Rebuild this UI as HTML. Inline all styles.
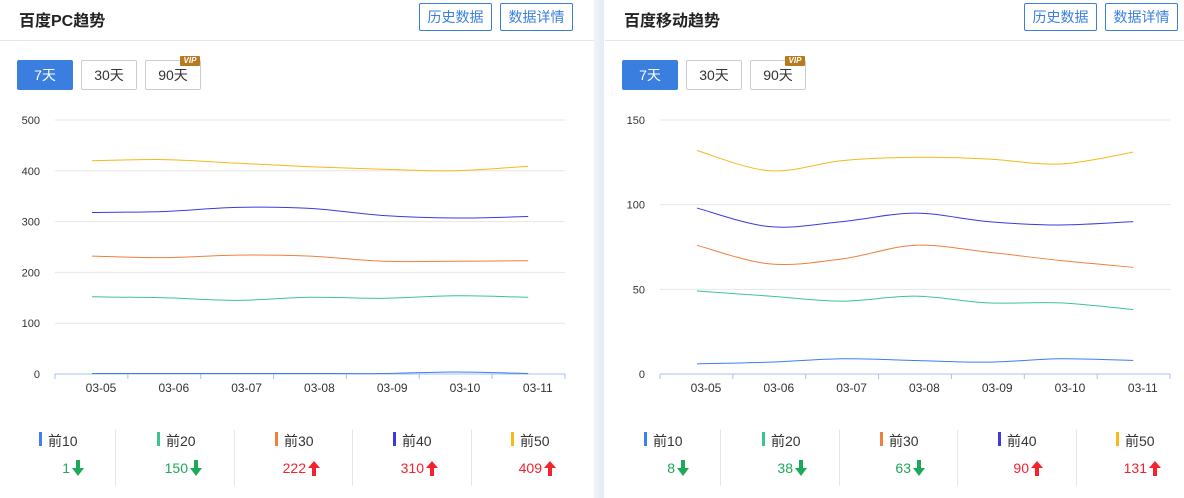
<!DOCTYPE html>
<html><head><meta charset="utf-8">
<style>
*{box-sizing:border-box;margin:0;padding:0}
body{width:1184px;height:498px;overflow:hidden;background:#fff;font-family:"Liberation Sans","Noto Sans CJK SC",sans-serif;position:relative}
.gap{position:absolute;left:594px;top:0;width:10px;height:498px;background:linear-gradient(90deg,#f0f3f8,#e4ebf6)}
.a{position:absolute;white-space:nowrap}
.title{font-size:16px;font-weight:bold;color:#222;top:7px}
.hb{top:3px;height:28px;border:1px solid #3a7fe0;border-radius:2px;color:#3a7fe0;font-size:14px;line-height:26px;text-align:center;width:73px}
.hl{top:40px;height:1px;background:#e6e6e6}
.tb{top:60px;height:30px;width:56px;border:1px solid #ccc;border-radius:2px;font-size:14px;line-height:28px;text-align:center;color:#333}
.tb.on{background:#3a7fe0;border-color:#3a7fe0;color:#fff}
.vip{width:20px;height:10px;background:#b87a1e;color:#fff;font-size:8px;line-height:10px;text-align:center;font-weight:bold;font-style:italic;border-radius:1px}
.lg{font-size:14px;color:#333;top:431px}
.bar{width:3px;height:14px;top:432px}
.val{font-size:14px;top:460px;text-align:right;width:60px}
.sep{top:430px;width:1px;height:56px;background:#e6e6e6}
</style></head><body>
<div class="gap"></div>
<div id="root"></div>
<svg id="sv" width="1184" height="498" style="position:absolute;left:0;top:0" font-family="Liberation Sans" font-size="11"></svg>
<script>
const R=document.getElementById('root'),S=document.getElementById('sv');
let html='',svg='';
function panel(ox,w,title,ymax,step,data,vals,dirs){
 html+=`<div class="a title" style="left:${ox+19}px">${title}</div>`;
 html+=`<div class="a hb" style="left:${ox+419}px">历史数据</div><div class="a hb" style="left:${ox+500}px">数据详情</div>`;
 html+=`<div class="a hl" style="left:${ox}px;width:${w}px"></div>`;
 html+=`<div class="a tb on" style="left:${ox+17}px">7天</div><div class="a tb" style="left:${ox+81}px">30天</div><div class="a tb" style="left:${ox+145}px">90天</div><div class="a vip" style="left:${ox+180}px;top:56px">VIP</div>`;
 const x0=ox+55,x1=ox+565,yb=374,yt=120;
 for(let v=0;v<=ymax;v+=step){const y=yb-(v/ymax)*(yb-yt);
  if(v>0)svg+=`<line x1="${x0}" x2="${x1}" y1="${y}" y2="${y}" stroke="#e6e6e6"/>`;
  svg+=`<text x="${ox+40}" y="${y+4}" text-anchor="end" fill="#333">${v}</text>`;}
 svg+=`<line x1="${x0}" x2="${x1}" y1="${yb}" y2="${yb}" stroke="#a9c1ee"/>`;
 for(let i=0;i<8;i++){const x=x0+i*(x1-x0)/7;svg+=`<line x1="${x}" x2="${x}" y1="${yb}" y2="${yb+5}" stroke="#a9c1ee"/>`;}
 const labs=['03-05','03-06','03-07','03-08','03-09','03-10','03-11'];
 labs.forEach((l,i)=>svg+=`<text x="${ox+101+i*72.8}" y="392" text-anchor="middle" fill="#333" font-size="12">${l}</text>`);
 const cols=['#3d7ef0','#3cc490','#f07f3c','#3a3ae0','#f5b91a'];
 data.forEach((d,k)=>{
  const p=d.map((v,i)=>[ox+92+i*72.7,yb-(v/ymax)*(yb-yt)]);
  let s=`M${p[0][0]},${p[0][1]}`;
  for(let i=0;i<p.length-1;i++){const a=p[Math.max(0,i-1)],b=p[i],c=p[i+1],e=p[Math.min(p.length-1,i+2)];
   s+=` C${b[0]+(c[0]-a[0])/6},${b[1]+(c[1]-a[1])/6} ${c[0]-(e[0]-b[0])/6},${c[1]-(e[1]-b[1])/6} ${c[0]},${c[1]}`;}
  svg+=`<path d="${s}" fill="none" stroke="${cols[k]}" stroke-width="1"/>`;
  const bx=ox+39+118*k;
  html+=`<div class="a bar" style="left:${bx}px;background:${cols[k]}"></div><div class="a lg" style="left:${bx+9}px">前${(k+1)*10}</div>`;
  if(k>0)html+=`<div class="a sep" style="left:${ox+115+118*(k-1)+(k-1)*0.5}px"></div>`;
  const up=dirs[k],col=up?'#f5222d':'#1ea85a';
  html+=`<div class="a val" style="left:${bx+33-60-2}px;color:${col}">${vals[k]}</div>`;
  const ax=bx+33;
  svg+= up?`<path d="M${ax+6},461 L${ax+12},468 L${ax+8},468 L${ax+8},476 L${ax+4},476 L${ax+4},468 L${ax},468 Z" fill="${col}"/>`
          :`<path d="M${ax+4},460 L${ax+8},460 L${ax+8},468 L${ax+12},468 L${ax+6},476 L${ax},468 L${ax+4},468 Z" fill="${col}"/>`;
 });
}
panel(0,594,'百度PC趋势',500,100,[[1,1,1,1,1,4,1],[152,150,145,151,149,154,151],[232,229,234,232,222,222,223],[318,320,328,326,312,307,310],[420,422,415,408,403,400,409]],[1,150,222,310,409],[0,0,1,1,1]);
panel(605,579,'百度移动趋势',150,50,[[6,7,9,8,7,9,8],[49,46,43,46,42,42,38],[76,65,68,76,72,67,63],[98,87,90,95,90,88,90],[132,120,126,128,127,124,131]],[8,38,63,90,131],[0,0,0,1,1]);
R.innerHTML=html;S.innerHTML=svg;
</script>
</body></html>
